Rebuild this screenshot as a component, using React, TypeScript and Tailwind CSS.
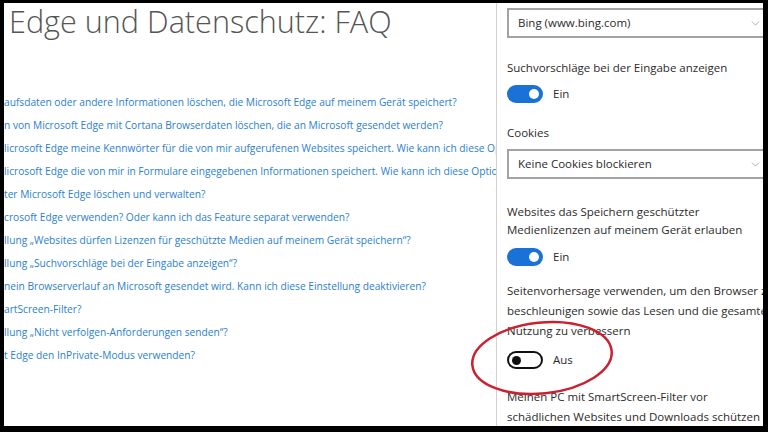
import { ChevronDown } from "lucide-react";

const links = [
  "aufsdaten oder andere Informationen löschen, die Microsoft Edge auf meinem Gerät speichert?",
  "n von Microsoft Edge mit Cortana Browserdaten löschen, die an Microsoft gesendet werden?",
  "licrosoft Edge meine Kennwörter für die von mir aufgerufenen Websites speichert. Wie kann ich diese Option deaktivieren?",
  "licrosoft Edge die von mir in Formulare eingegebenen Informationen speichert. Wie kann ich diese Option deaktivieren?",
  "ter Microsoft Edge löschen und verwalten?",
  "crosoft Edge verwenden? Oder kann ich das Feature separat verwenden?",
  "llung „Websites dürfen Lizenzen für geschützte Medien auf meinem Gerät speichern“?",
  "llung „Suchvorschläge bei der Eingabe anzeigen“?",
  "nein Browserverlauf an Microsoft gesendet wird. Kann ich diese Einstellung deaktivieren?",
  "artScreen-Filter?",
  "llung „Nicht verfolgen-Anforderungen senden“?",
  "t Edge den InPrivate-Modus verwenden?",
];

function Toggle({ on, label }: { on: boolean; label: string }) {
  return (
    <div className="flex items-center gap-[10px]">
      {on ? (
        <div className="flex h-[18px] w-[36px] items-center justify-end rounded-full bg-[#1a72d6] pr-[4px]">
          <div className="h-[10px] w-[10px] rounded-full bg-white" />
        </div>
      ) : (
        <div className="flex h-[18px] w-[36px] items-center rounded-full border-2 border-[#111] pl-[3px]">
          <div className="h-[9px] w-[9px] rounded-full bg-[#111]" />
        </div>
      )}
      <span className="text-[11.5px] text-[#2b2b2b]">{label}</span>
    </div>
  );
}

function Select({ value }: { value: string }) {
  return (
    <div className="flex h-[30px] w-[275px] items-center justify-between border-2 border-[#a3a3a3] pl-[9px] pr-[18px]">
      <span className="text-[11.5px] text-[#2b2b2b]">{value}</span>
      <ChevronDown size={13} strokeWidth={1.5} className="text-[#9a9a9a]" />
    </div>
  );
}

export default function App() {
  return (
    <div
      className="h-[432px] w-[768px] bg-black pb-[6px] pl-[4px] pr-[5px] pt-[3px]"
      style={{ fontFamily: '"Open Sans", "Noto Sans", sans-serif' }}
    >
      <div className="relative flex h-full overflow-hidden bg-white">
        <div className="w-[492px] shrink-0 overflow-hidden">
          <h1 className="whitespace-nowrap pl-[5px] text-[30.6px] font-light leading-[36px] text-[#555]">
            Edge und Datenschutz: FAQ
          </h1>
          <ul className="mt-[52px]">
            {links.map((l) => (
              <li
                key={l}
                className="whitespace-nowrap text-[10.2px] leading-[23px] text-[#2a80d0]"
              >
                {l}
              </li>
            ))}
          </ul>
        </div>

        <aside className="flex-1 overflow-hidden border-l border-[#d2d2d2] pl-[10px] pt-[5px] text-[11.5px] text-[#2b2b2b]">
          <Select value="Bing (www.bing.com)" />
          <p className="mt-[20px] leading-[19px]">Suchvorschläge bei der Eingabe anzeigen</p>
          <div className="mt-[8px]">
            <Toggle on label="Ein" />
          </div>
          <p className="mt-[20px] leading-[19px]">Cookies</p>
          <div className="mt-[7px]">
            <Select value="Keine Cookies blockieren" />
          </div>
          <p className="mt-[24px] leading-[18px]">
            Websites das Speichern geschützter
            <br />
            Medienlizenzen auf meinem Gerät erlauben
          </p>
          <div className="mt-[9px]">
            <Toggle on label="Ein" />
          </div>
          <p className="mt-[15px] whitespace-nowrap leading-[20px]">
            Seitenvorhersage verwenden, um den Browser zu
            <br />
            beschleunigen sowie das Lesen und die gesamte
            <br />
            Nutzung zu verbessern
          </p>
          <div className="mt-[10px]">
            <Toggle on={false} label="Aus" />
          </div>
          <p className="mt-[18px] whitespace-nowrap leading-[20px]">
            Meinen PC mit SmartScreen-Filter vor
            <br />
            schädlichen Websites und Downloads schützen
          </p>
        </aside>

        <svg
          className="pointer-events-none absolute left-[462px] top-[311px]"
          width="152"
          height="88"
          viewBox="0 0 152 88"
        >
          <ellipse
            cx="76"
            cy="44"
            rx="70"
            ry="35.5"
            fill="none"
            stroke="#cc1f2f"
            strokeWidth="2.5"
            transform="rotate(-6 76 44)"
          />
        </svg>
      </div>
    </div>
  );
}
